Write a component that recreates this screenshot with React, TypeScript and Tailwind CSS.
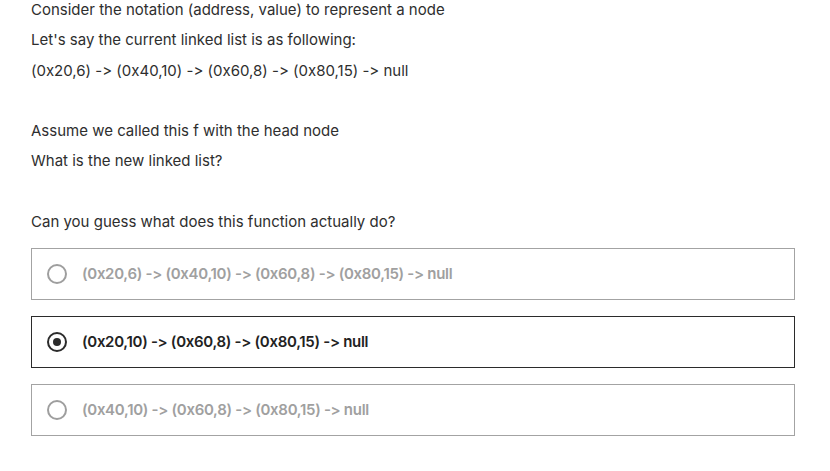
import React, { useState } from "react";

const options = [
  "(0x20,6) -> (0x40,10) -> (0x60,8) -> (0x80,15) -> null",
  "(0x20,10) -> (0x60,8) -> (0x80,15) -> null",
  "(0x40,10) -> (0x60,8) -> (0x80,15) -> null",
];

const App = () => {
  const [selected, setSelected] = useState<number>(1);

  return (
    <div className="min-h-screen bg-white font-['Inter',sans-serif] text-[15px] text-[#2e2e2e] [font-feature-settings:'calt'_0,'liga'_0]">
      <div className="pl-[31px] pr-[35px] mt-[-5px]">
        <div className="leading-[30.3px]">
          <p>Consider the notation (address, value) to represent a node</p>
          <p>Let's say the current linked list is as following:</p>
          <p>(0x20,6) -&gt; (0x40,10) -&gt; (0x60,8) -&gt; (0x80,15) -&gt; null</p>
          <p>&nbsp;</p>
          <p>Assume we called this f with the head node</p>
          <p>What is the new linked list?</p>
          <p>&nbsp;</p>
          <p>Can you guess what does this function actually do?</p>
        </div>

        <div className="mt-[11px] flex flex-col gap-[16px]">
          {options.map((opt, i) => {
            const active = selected === i;
            return (
              <div
                key={i}
                onClick={() => setSelected(i)}
                className={`flex h-[52px] items-center border cursor-pointer ${
                  active ? "border-[#2b2b2b]" : "border-[#a3a3a3]"
                }`}
              >
                <div
                  className={`ml-[15px] flex h-[20px] w-[20px] items-center justify-center rounded-full border-2 ${
                    active ? "border-[#2b2b2b]" : "border-[#9e9e9e]"
                  }`}
                >
                  {active && <div className="h-[8px] w-[8px] rounded-full bg-[#2b2b2b]" />}
                </div>
                <span
                  className={`ml-[15px] font-semibold tracking-[-0.3px] ${
                    active ? "text-[#222]" : "text-[#a0a0a0]"
                  }`}
                >
                  {opt}
                </span>
              </div>
            );
          })}
        </div>
      </div>
    </div>
  );
};

export default App;
